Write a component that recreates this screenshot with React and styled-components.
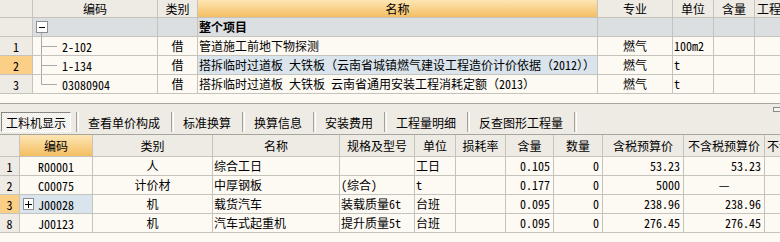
import React from 'react';
import styled, { createGlobalStyle, css } from 'styled-components';

const C = {
  cream: '#fdf9f3',
  head: '#eeeae4',
  line: '#c6c2bc',
  group: '#dcdfe2',
  sel: '#dae4ed',
  orange: '#fbcf85',
  dark: '#a8a49e',
};

const FONT = '"Noto Sans Mono CJK SC", "Noto Sans CJK SC", "Liberation Mono", monospace';

const Global = createGlobalStyle`
  html, body { margin: 0; padding: 0; background: ${C.cream}; }
  body { font-family: ${FONT}; font-size: 12px; color: #000; overflow: hidden; }
`;

const Page = styled.div`
  width: 780px;
  height: 242px;
  overflow: hidden;
  display: flex;
  flex-direction: column;
  background: ${C.cream};
`;

const Grid = styled.div`
  display: grid;
  grid-template-columns: ${(p) => p.$cols};
  grid-template-rows: ${(p) => p.$head}px;
  grid-auto-rows: 19px;
  width: max-content;
`;

const Cell = styled.div`
  box-sizing: border-box;
  border-right: 1px solid ${C.line};
  border-bottom: 1px solid ${C.line};
  background: ${(p) => (p.$bg ? p.$bg : C.cream)};
  display: flex;
  align-items: center;
  justify-content: ${(p) => (p.$align === 'right' ? 'flex-end' : p.$align === 'center' ? 'center' : 'flex-start')};
  padding: 0 ${(p) => (p.$align === 'right' ? '3px' : '1px')} 0 1px;
  white-space: nowrap;
  overflow: hidden;
  line-height: 18px;
  font-weight: ${(p) => (p.$bold ? 700 : 400)};
`;

const HeadCell = styled.div`
  box-sizing: border-box;
  border-right: 1px solid ${C.line};
  border-bottom: 1px solid ${C.line};
  background: ${(p) => (p.$active ? 'linear-gradient(#fde6b4, #f4be62)' : C.head)};
  display: flex;
  align-items: center;
  justify-content: ${(p) => (p.$start ? 'flex-start' : 'center')};
  padding-left: ${(p) => (p.$start ? '2px' : '0')};
  white-space: nowrap;
  overflow: hidden;
  font-size: 12px;
`;

const NumCell = styled.div`
  box-sizing: border-box;
  border-right: 1px solid ${C.line};
  border-bottom: 1px solid ${C.line};
  background: ${(p) => (p.$active ? C.orange : C.head)};
  display: flex;
  align-items: center;
  justify-content: center;
`;

const TreeCell = styled.div`
  box-sizing: border-box;
  border-right: 1px solid ${C.line};
  border-bottom: 1px solid ${C.line};
  background: ${(p) => (p.$bg ? p.$bg : C.cream)};
  display: flex;
  align-items: center;
  white-space: nowrap;
  overflow: hidden;
`;

const TreeSvg = styled.svg`
  flex: none;
  width: 29px;
  height: 18px;
  display: block;
`;

const Gap = styled.div`
  height: 9px;
  background: ${C.cream};
  border-bottom: 1px solid ${C.dark};
`;

const Toolbar = styled.div`
  position: relative;
  height: 31px;
  box-sizing: border-box;
  background: ${C.head};
  border-bottom: 1px solid ${C.dark};
  display: flex;
  align-items: flex-end;
  padding: 0 0 2px 1px;
`;

const Handle = styled.div`
  position: absolute;
  top: 3px;
  right: -1px;
  width: 8px;
  height: 5px;
  box-sizing: border-box;
  border: 1px solid #8d8a85;
  background: #f6f4f0;
`;

const Tab = styled.div`
  height: 20px;
  box-sizing: border-box;
  display: flex;
  align-items: center;
  white-space: nowrap;
  font-size: 12px;
  padding: 0 11px 0 9px;
  ${(p) =>
    p.$active &&
    css`
      padding: 0 4px;
      margin-right: 5px;
      border: 1px solid;
      border-color: #8a8782 #ffffff #ffffff #8a8782;
      background: repeating-conic-gradient(#ffffff 0 25%, #ebe8e2 0 50%) 0 0 / 2px 2px;
    `}
`;

const Sep = styled.div`
  width: 1px;
  height: 20px;
  border-left: 1px solid #a5a29c;
  border-right: 1px solid #ffffff;
  flex: none;
`;

const ExpandCell = styled.div`
  box-sizing: border-box;
  border-right: 1px solid ${C.line};
  border-bottom: 1px solid ${C.line};
  background: ${(p) => (p.$bg ? p.$bg : C.cream)};
  display: grid;
  grid-template-columns: 1fr auto 1fr;
  align-items: center;
  white-space: nowrap;
  overflow: hidden;
`;

const PlusBox = styled.div`
  width: 11px;
  height: 12px;
  box-sizing: border-box;
  margin-left: 3px;
  border: 1px solid #8e8e8e;
  background: #fff;
  display: flex;
  align-items: center;
  justify-content: center;
`;

const LINE = '#a9a9a9';

function Tree({ kind }) {
  if (kind === 'root') {
    return (
      <TreeSvg viewBox="0 0 29 18">
        <rect x="3.5" y="3.5" width="11" height="11" fill="#fff" stroke="#8e8e8e" />
        <line x1="6" y1="9.5" x2="12" y2="9.5" stroke="#000" />
        <line x1="8.5" y1="15" x2="8.5" y2="18" stroke={LINE} />
      </TreeSvg>
    );
  }
  return (
    <TreeSvg viewBox="0 0 29 18">
      <line x1="8.5" y1="0" x2="8.5" y2={kind === 'last' ? 9.5 : 18} stroke={LINE} />
      <line x1="8.5" y1="9.5" x2="24" y2="9.5" stroke={LINE} />
    </TreeSvg>
  );
}

const topCols = '33px 125px 40px 400px 75px 41px 41px 60px';
const topHead = ['', '编码', '类别', '名称', '专业', '单位', '含量', '工程量'];

const topRows = [
  { group: true, name: '整个项目' },
  { n: '1', code: '2-102', type: '借', name: '管道施工前地下物探测', major: '燃气', unit: '100m2', tree: 'mid' },
  {
    n: '2',
    code: '1-134',
    type: '借',
    name: '搭拆临时过道板 大铁板（云南省城镇燃气建设工程造价计价依据（2012））',
    major: '燃气',
    unit: 't',
    sel: true,
    tree: 'mid',
  },
  {
    n: '3',
    code: '03080904',
    type: '借',
    name: '搭拆临时过道板 大铁板 云南省通用安装工程消耗定额（2013）',
    major: '燃气',
    unit: 't',
    tree: 'last',
  },
];

const botCols = '20px 73px 120px 127px 75px 41px 50px 48px 49px 81px 81px 40px';
const botHead = ['', '编码', '类别', '名称', '规格及型号', '单位', '损耗率', '含量', '数量', '含税预算价', '不含税预算价', '不含税'];

const botRows = [
  { n: '1', code: 'R00001', type: '人', name: '综合工日', spec: '', unit: '工日', qty: '0.105', amount: '0', p1: '53.23', p2: '53.23' },
  { n: '2', code: 'C00075', type: '计价材', name: '中厚钢板', spec: '(综合)', unit: 't', qty: '0.177', amount: '0', p1: '5000', p2: '—', dash: true },
  { n: '3', code: 'J00028', type: '机', name: '载货汽车', spec: '装载质量6t', unit: '台班', qty: '0.095', amount: '0', p1: '238.96', p2: '238.96', sel: true },
  { n: '8', code: 'J00123', type: '机', name: '汽车式起重机', spec: '提升质量5t', unit: '台班', qty: '0.095', amount: '0', p1: '276.45', p2: '276.45' },
];

const tabs = ['工料机显示', '查看单价构成', '标准换算', '换算信息', '安装费用', '工程量明细', '反查图形工程量'];

export default function App() {
  return (
    <>
      <Global />
      <Page>
        <Grid $cols={topCols} $head={18}>
          {topHead.map((h, i) => (
            <HeadCell key={'th' + i} $active={i === 3} $start={i === topHead.length - 1}>
              {h}
            </HeadCell>
          ))}
          {topRows.map((r, i) =>
            r.group ? (
              <React.Fragment key={'tr' + i}>
                <NumCell />
                <TreeCell $bg={C.group}>
                  <Tree kind="root" />
                </TreeCell>
                <Cell $bg={C.group} />
                <Cell $bg={C.group} $bold>
                  {r.name}
                </Cell>
                <Cell $bg={C.group} />
                <Cell $bg={C.group} />
                <Cell $bg={C.group} />
                <Cell $bg={C.group} />
              </React.Fragment>
            ) : (
              <React.Fragment key={'tr' + i}>
                <NumCell $active={r.sel}>{r.n}</NumCell>
                <TreeCell>
                  <Tree kind={r.tree} />
                  {r.code}
                </TreeCell>
                <Cell $align="center">{r.type}</Cell>
                <Cell $bg={r.sel ? C.sel : undefined}>{r.name}</Cell>
                <Cell $align="center">{r.major}</Cell>
                <Cell>{r.unit}</Cell>
                <Cell />
                <Cell />
              </React.Fragment>
            )
          )}
        </Grid>
        <Gap />
        <Toolbar>
          <Handle />
          {tabs.map((t, i) => (
            <React.Fragment key={'tab' + i}>
              <Tab $active={i === 0}>{t}</Tab>
              <Sep />
            </React.Fragment>
          ))}
        </Toolbar>
        <Grid $cols={botCols} $head={22}>
          {botHead.map((h, i) => (
            <HeadCell key={'bh' + i} $active={i === 1} $start={i === botHead.length - 1}>
              {h}
            </HeadCell>
          ))}
          {botRows.map((r, i) => (
            <React.Fragment key={'br' + i}>
              <NumCell $active={r.sel}>{r.n}</NumCell>
              <ExpandCell $bg={r.sel ? C.sel : undefined}>
                <div>
                  {r.sel && (
                    <PlusBox>
                      <svg width="7" height="7" viewBox="0 0 7 7">
                        <line x1="0" y1="3.5" x2="7" y2="3.5" stroke="#000" />
                        <line x1="3.5" y1="0" x2="3.5" y2="7" stroke="#000" />
                      </svg>
                    </PlusBox>
                  )}
                </div>
                <span>{r.code}</span>
                <div />
              </ExpandCell>
              <Cell $align="center">{r.type}</Cell>
              <Cell>{r.name}</Cell>
              <Cell>{r.spec}</Cell>
              <Cell>{r.unit}</Cell>
              <Cell />
              <Cell $align="right">{r.qty}</Cell>
              <Cell $align="right">{r.amount}</Cell>
              <Cell $align="right">{r.p1}</Cell>
              <Cell $align={r.dash ? 'center' : 'right'}>{r.p2}</Cell>
              <Cell />
            </React.Fragment>
          ))}
        </Grid>
      </Page>
    </>
  );
}
